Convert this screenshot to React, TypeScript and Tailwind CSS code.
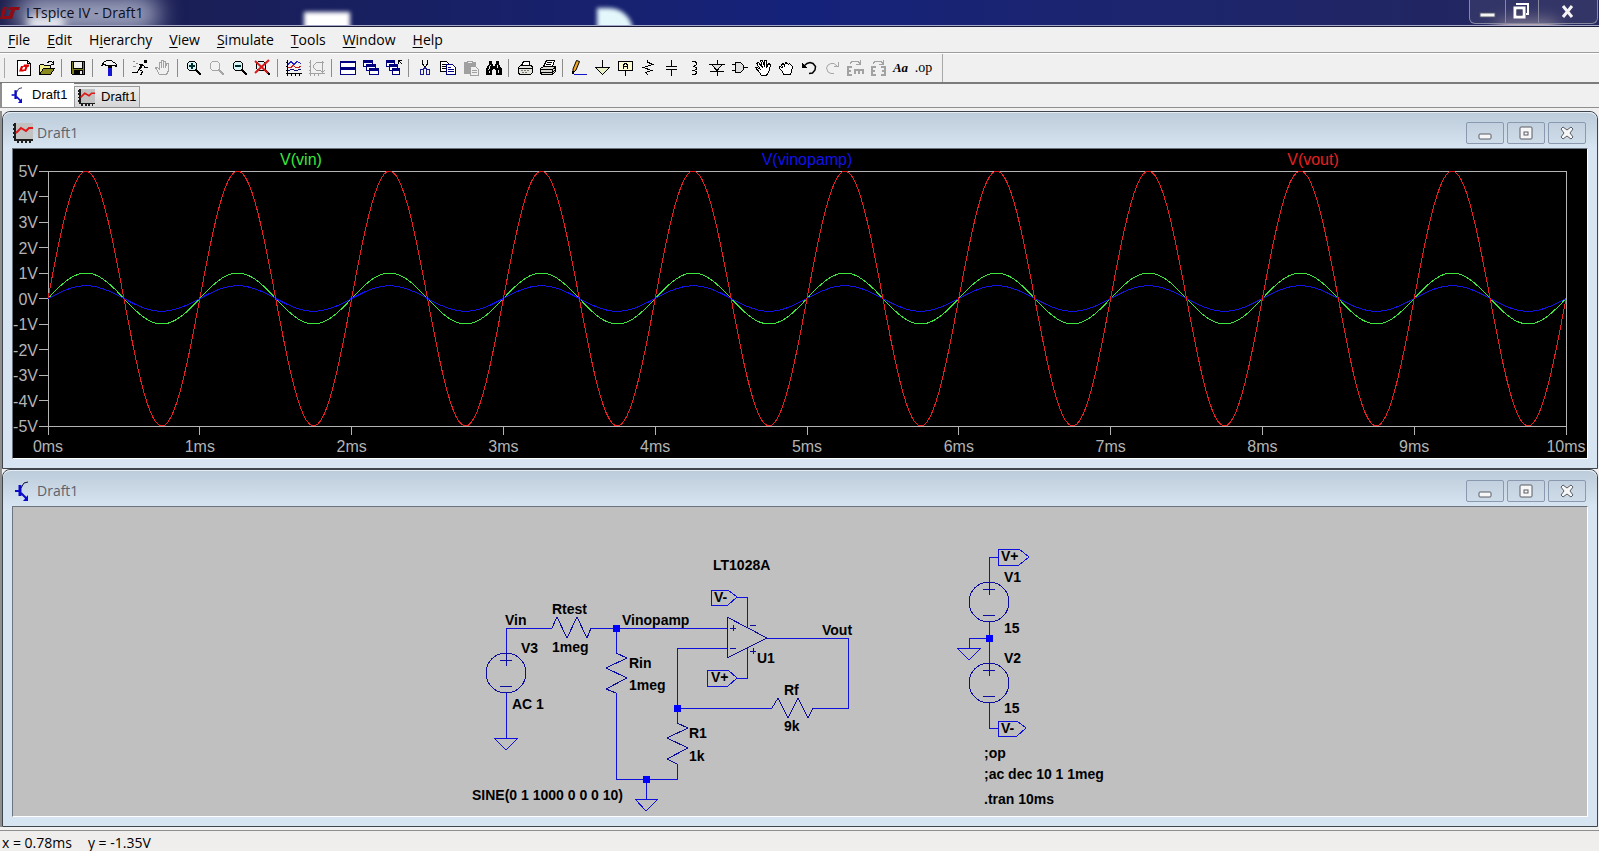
import React from 'react';
import clsx from 'clsx';

/** Toolbar glyph, drawn on the pixel grid */
const Glyph: React.FC<{ children: React.ReactNode }> = ({ children }) => (
  <svg
    width="18"
    height="18"
    viewBox="0 0 18 18"
    fill="none"
    stroke="#000"
    shapeRendering="crispEdges"
    aria-hidden="true"
  >
    {children}
  </svg>
);

const HAND_PATH =
  'M5.5 15.5 L2.5 10.5 L1.5 8.5 L3.5 8.5 L5.5 10.5 L5.5 3.5 L7.5 3.5 L7.5 8.5 L7.5 1.5 L9.5 1.5 L9.5 8.5 L9.5 2.5 L11.5 2.5 L11.5 8.5 L12.5 4.5 L14.5 4.5 L14.5 11.5 L12.5 15.5 Z';

const Lens = ({ color, fill = '#d9f4f4' }: { color: string; fill?: string }) => (
  <>
    <circle cx="7" cy="7" r="5" fill={fill} stroke={color} />
    <path d="M11 11 L16 16" stroke={color} strokeWidth="2" />
  </>
);

type Tool = { name: string; icon: React.ReactNode; disabled?: boolean };

const TOOL_GROUPS: Tool[][] = [
  [
    {
      name: 'New Schematic',
      icon: (
        <Glyph>
          <path d="M2.5 1.5 H12.5 L15.5 4.5 V16.5 H2.5 Z" fill="#fff" />
          <path d="M12.5 1.5 V4.5 H15.5" />
          <path
            d="M6 7 L4 12.5 H8.5 L9.5 10.5 H7 L8.5 7 Z M9 5.5 H14.5 L13.5 8 H12.5 L11 12 H8.8 L10.3 8 H8 Z"
            fill="#e00000"
            stroke="none"
            shapeRendering="auto"
          />
        </Glyph>
      ),
    },
    {
      name: 'Open',
      icon: (
        <Glyph>
          <path d="M1.5 14.5 V6.5 L2.5 5.5 H5.5 L6.5 6.5 H12.5 V9" fill="#f4f08c" />
          <path d="M1.5 15.5 L5.5 9.5 H16.5 L12.5 15.5 Z" fill="#8a8a1e" />
          <path d="M9.5 4.5 L10.5 2.5 H13.5 L15.5 4.5 M15.5 2 V5.5 M13 5.5 H16" />
        </Glyph>
      ),
    },
  ],
  [
    {
      name: 'Save',
      icon: (
        <Glyph>
          <path d="M2.5 2.5 H15.5 V15.5 H3.5 L2.5 14.5 Z" fill="#7c7c18" />
          <rect x="5" y="3" width="8" height="6" fill="#efefef" stroke="none" />
          <rect x="5" y="11" width="9" height="5" fill="#000" stroke="none" />
          <rect x="11" y="12" width="2" height="3" fill="#efefef" stroke="none" />
          <path d="M4.5 3 V9.5 H13.5 V3" />
        </Glyph>
      ),
    },
  ],
  [
    {
      name: 'Control Panel',
      icon: (
        <Glyph>
          <path
            d="M1.5 6.5 L4.5 2.5 L7.5 1.5 H11.5 L13.5 3.5 H14.5 L16.5 5.5 V7.5 L14.5 6.5 H6.5 L4.5 5.5 Z"
            fill="#f4f4f4"
          />
          <rect x="8" y="7" width="4" height="2" fill="#000" stroke="none" />
          <rect x="8" y="9" width="4" height="8" fill="#1414d2" stroke="none" />
        </Glyph>
      ),
    },
  ],
  [
    {
      name: 'Run',
      icon: (
        <Glyph>
          <rect x="13" y="1" width="3" height="3" fill="#000" stroke="none" />
          <path d="M7.5 5.5 H12 M8.5 10.5 L11.5 12.5 L9.5 16.5 M8 11 L6 13.5 H1 M12 6 L14 8.5 H17" />
          <path d="M11.5 5 L8 11" strokeWidth="2" />
          <path d="M2 2.5 H4 M5 4.5 H7 M2 7.5 H5" stroke="#8c8c8c" />
        </Glyph>
      ),
    },
    {
      name: 'Halt',
      disabled: true,
      icon: (
        <Glyph>
          <path d={HAND_PATH} stroke="#a2a2a2" />
        </Glyph>
      ),
    },
  ],
  [
    {
      name: 'Zoom Area',
      icon: (
        <Glyph>
          <Lens color="#000" />
          <path d="M4 7 H10 M7 4 V10" strokeWidth="2" stroke="#003030" />
        </Glyph>
      ),
    },
    {
      name: 'Pan',
      disabled: true,
      icon: (
        <Glyph>
          <Lens color="#a6a6a6" fill="#f2f2f2" />
        </Glyph>
      ),
    },
    {
      name: 'Zoom Out',
      icon: (
        <Glyph>
          <Lens color="#000" />
          <path d="M4 7 H10" strokeWidth="2" stroke="#003030" />
        </Glyph>
      ),
    },
    {
      name: 'Zoom Full Extents',
      icon: (
        <Glyph>
          <Lens color="#000" />
          <path d="M1 2 L14 14 M15 1 L1 14" stroke="#d81818" strokeWidth="2" shapeRendering="auto" />
        </Glyph>
      ),
    },
  ],
  [
    {
      name: 'Autorange',
      icon: (
        <Glyph>
          <path d="M2.5 1 V16.5 M1 14.5 H17 M1 3.5 H3 M1 7.5 H3 M1 11.5 H3 M6.5 14 V17 M10.5 14 V17 M14.5 14 V17" />
          <path d="M3 5.5 L6 2.5 L9 5.5 L12 2.5 L16 4.5" stroke="#2020c0" />
          <path d="M3 8.5 H6 L8 6.5 L11 8.5 H13 L16 7.5" stroke="#d01818" />
          <path d="M3 11.5 L7 10.5 L11 11.5 L16 10.5" stroke="#101070" />
        </Glyph>
      ),
    },
    {
      name: 'Plot Limits',
      disabled: true,
      icon: (
        <Glyph>
          <g stroke="#a2a2a2">
            <path d="M2.5 1 V16.5 M1 14.5 H17 M1 3.5 H3 M1 7.5 H3 M1 11.5 H3 M6.5 14 V17 M10.5 14 V17" />
            <path d="M13 3.5 H8.5 L5.5 6.5 V8.5 L8.5 11.5 H13 M14.5 2 V13 M12.5 4.5 L14.5 2.5 L16.5 4.5 M12.5 11.5 L14.5 13.5 L16.5 11.5" />
          </g>
        </Glyph>
      ),
    },
  ],
  [
    {
      name: 'Tile Windows',
      icon: (
        <Glyph>
          <g stroke="#000080">
            <rect x="1.5" y="2.5" width="15" height="6" fill="#fff" />
            <rect x="1.5" y="9.5" width="15" height="6" fill="#fff" />
            <path d="M1 3 H17 M1 10 H17" strokeWidth="2" />
          </g>
        </Glyph>
      ),
    },
    {
      name: 'Cascade Windows',
      icon: (
        <Glyph>
          <g stroke="#000080">
            <rect x="1.5" y="1.5" width="9" height="6" fill="#fff" />
            <path d="M1 3 H11" strokeWidth="2" />
            <rect x="4.5" y="5.5" width="9" height="6" fill="#fff" />
            <path d="M4 7 H14" strokeWidth="2" />
            <rect x="7.5" y="9.5" width="9" height="6" fill="#fff" />
            <path d="M7 11 H17" strokeWidth="2" />
          </g>
        </Glyph>
      ),
    },
    {
      name: 'Close All Windows',
      icon: (
        <Glyph>
          <g stroke="#000080">
            <rect x="1.5" y="1.5" width="8" height="6" fill="#fff" />
            <path d="M1 3 H10" strokeWidth="2" />
            <rect x="4.5" y="5.5" width="8" height="6" fill="#fff" />
            <path d="M4 7 H13" strokeWidth="2" />
            <rect x="7.5" y="9.5" width="7" height="6" fill="#fff" />
            <path d="M7 11 H15" strokeWidth="2" />
          </g>
          <path d="M13.5 5 V1.5 H17 M13.5 1.5 L17 5" />
        </Glyph>
      ),
    },
  ],
  [
    {
      name: 'Cut',
      icon: (
        <Glyph>
          <path d="M6.5 1 V4.5 L9 9 M11.5 1 V4.5 L9 9" />
          <g stroke="#1a1a90">
            <path d="M9 8 L7 11 M9 8 L11 11" />
            <ellipse cx="6" cy="13" rx="2" ry="3" />
            <ellipse cx="12" cy="13" rx="2" ry="3" />
          </g>
        </Glyph>
      ),
    },
    {
      name: 'Copy',
      icon: (
        <Glyph>
          <path d="M1.5 2.5 H7.5 L9.5 4.5 V12.5 H1.5 Z" fill="#fff" />
          <path d="M3 5.5 H7 M3 7.5 H8 M3 9.5 H8" />
          <path d="M7.5 5.5 H13.5 L16.5 8.5 V15.5 H7.5 Z" fill="#fff" stroke="#000080" />
          <path d="M9 8.5 H12 M9 10.5 H15 M9 12.5 H15" stroke="#000080" />
        </Glyph>
      ),
    },
    {
      name: 'Paste',
      disabled: true,
      icon: (
        <Glyph>
          <rect x="2" y="3" width="12" height="12" rx="1" fill="#a0a0a0" stroke="none" />
          <path d="M5.5 4.5 V2.5 H10.5 V4.5 Z" fill="#efefef" stroke="#a0a0a0" />
          <path d="M8.5 7.5 H13.5 L16.5 10.5 V16.5 H8.5 Z" fill="#efefef" stroke="#a0a0a0" />
          <path d="M10 11.5 H15 M10 13.5 H15" stroke="#a0a0a0" />
        </Glyph>
      ),
    },
    {
      name: 'Find',
      icon: (
        <Glyph>
          <path
            d="M4 2 H7 V5 H8 V7 H10 V5 H11 V2 H14 V5 L17 10 V16 H11 V11 H10 V10 H8 V11 H7 V16 H1 V10 L4 5 Z"
            fill="#000"
            stroke="none"
          />
          <path d="M5.5 6 L3.5 11 M12.5 6 V9 M13.5 11 V14 M4.5 12 V14" stroke="#e8e8e8" />
        </Glyph>
      ),
    },
  ],
  [
    {
      name: 'Print Setup',
      icon: (
        <Glyph>
          <path d="M5.5 6.5 L7.5 2.5 H13.5 V6.5" fill="#fff" />
          <path d="M2.5 8.5 L4.5 6.5 H15.5 L16.5 8.5 V13.5 L14.5 15.5 H3.5 L2.5 13.5 Z" fill="#e4e4dc" />
          <path d="M3 9.5 H16" />
          <path d="M5 11.5 H7 M8 11.5 H10 M11 11.5 H13 M6 13.5 H8 M9 13.5 H11" stroke="#777" />
        </Glyph>
      ),
    },
    {
      name: 'Print',
      icon: (
        <Glyph>
          <path d="M4.5 7.5 L7.5 1.5 H15.5 L13.5 7.5" fill="#fff" />
          <path d="M8 3.5 H13 M7 5.5 H12" />
          <path d="M1.5 9.5 L4.5 7.5 H16.5 V12.5 L13.5 15.5 H2.5 L1.5 13.5 Z" fill="#d8d8d0" />
          <path d="M2 10.5 H13.5 L16 8.5 M2 13.5 H13.5 L16 11 M13.5 10 V15" />
        </Glyph>
      ),
    },
  ],
  [
    {
      name: 'Wire',
      icon: (
        <Glyph>
          <path d="M6.5 1.5 L9.5 2.5 L6 11 L3 14 L3 10 Z" fill="#f0a820" shapeRendering="auto" />
          <path d="M3.5 12 L3 15" strokeWidth="2" />
          <path d="M4 15.5 H17" stroke="#1414c8" />
        </Glyph>
      ),
    },
    {
      name: 'Ground',
      icon: (
        <Glyph>
          <path d="M9.5 1 V8.5" />
          <path d="M2.5 8.5 H16.5 L9.5 15.5 Z" fill="#e6f0c4" />
        </Glyph>
      ),
    },
    {
      name: 'Label Net',
      icon: (
        <Glyph>
          <rect x="2.5" y="2.5" width="14" height="9" rx="1" fill="#fbfad0" />
          <path d="M9.5 12 V16.5 M7.5 10 V6.5 L8.5 4.5 H10.5 L11.5 6.5 V10 M8 7.5 H11" />
        </Glyph>
      ),
    },
    {
      name: 'Resistor',
      icon: (
        <Glyph>
          <path d="M8.5 1 V3 L13.5 5.5 L4.5 8.5 L12.5 11.5 L6.5 13.5 L9.5 16.5" />
        </Glyph>
      ),
    },
    {
      name: 'Capacitor',
      icon: (
        <Glyph>
          <path d="M9.5 1 V7 M4 7.5 H15 M4 10.5 H15 M9.5 11 V17" />
        </Glyph>
      ),
    },
    {
      name: 'Inductor',
      icon: (
        <Glyph>
          <path d="M7 2.5 H9.5 L11.5 3.5 V5.5 L8.5 7.5 L11.5 8.5 V10.5 L8.5 11.5 L11.5 12.5 V14.5 L9.5 15.5 H7" />
        </Glyph>
      ),
    },
    {
      name: 'Diode',
      icon: (
        <Glyph>
          <path d="M3.5 5.5 H14.5 L9 11.5 Z" fill="#dedede" />
          <path d="M1 5.5 H17 M2 12.5 H16 M9 1 V5 M9 12 V17" />
        </Glyph>
      ),
    },
    {
      name: 'Component',
      icon: (
        <Glyph>
          <path d="M4.5 3.5 H9.5 L12.5 6.5 V10.5 L9.5 13.5 H4.5 Z" fill="#dedede" />
          <path d="M1 5.5 H4 M1 11.5 H4 M13 8.5 H17" />
        </Glyph>
      ),
    },
    {
      name: 'Move',
      icon: (
        <Glyph>
          <path
            d="M7.5 16.5 L5.5 13.5 L1.5 8.5 L3.5 8.5 L6.5 10.5 L2.5 4.5 L4.5 3.5 L8.5 8.5 L6.5 1.5 L8.5 1.5 L10.5 7.5 L10.5 1.5 L12.5 1.5 L12.5 8.5 L14.5 4.5 L16.5 5.5 L15.5 11.5 L12.5 16.5 Z"
            fill="#fff"
          />
        </Glyph>
      ),
    },
    {
      name: 'Drag',
      icon: (
        <Glyph>
          <path
            d="M6.5 15.5 L5.5 12.5 L2.5 9.5 L2.5 7.5 L5.5 8.5 L4.5 5.5 L6.5 4.5 L7.5 6.5 L8.5 3.5 L10.5 4.5 L11.5 5.5 L12.5 4.5 L15.5 7.5 L14.5 12.5 L13.5 15.5 Z"
            fill="#fff"
          />
        </Glyph>
      ),
    },
    {
      name: 'Undo',
      icon: (
        <Glyph>
          <path d="M4 7 L7 4.5 L10 3.5 L13 4.5 L15.5 7.5 L15 11 L12.5 14 L9 14.5" shapeRendering="auto" strokeWidth="1.5" />
          <path d="M2 4 V9 H7 Z" fill="#000" stroke="none" />
        </Glyph>
      ),
    },
    {
      name: 'Redo',
      disabled: true,
      icon: (
        <Glyph>
          <path d="M14 7 L11 4.5 H8 L5 6 L3.5 9 L5 13 L8 14.5 H11" stroke="#a6a6a6" shapeRendering="auto" />
          <path d="M15.5 3 V7.5 H11" stroke="#a6a6a6" />
        </Glyph>
      ),
    },
    {
      name: 'Rotate',
      disabled: true,
      icon: (
        <Glyph>
          <g stroke="#a2a2a2">
            <path d="M6 8 H2 V16 H6 M2 12 H5" strokeWidth="2" />
            <path d="M9 15 V11 H17 V15 M13 11 V15" strokeWidth="2" />
            <path d="M4 4.5 L6 2.5 H12 L14 4.5 M14.5 1 V5.5 H10" />
          </g>
        </Glyph>
      ),
    },
    {
      name: 'Mirror',
      disabled: true,
      icon: (
        <Glyph>
          <g stroke="#a2a2a2">
            <path d="M7 8 H3 V16 H7 M3 12 H6 M12 8 H16 V16 H12 M16 12 H13" strokeWidth="2" />
            <path d="M4 4.5 L6 2.5 H12 L14 4.5 M14.5 1 V5.5 H10" />
          </g>
        </Glyph>
      ),
    },
    {
      name: 'Text',
      icon: <span className="font-['Liberation_Serif',serif] text-[13px] font-bold italic">Aa</span>,
    },
    {
      name: 'SPICE Directive',
      icon: <span className="font-['Liberation_Serif',serif] text-sm font-medium">.op</span>,
    },
  ],
];

// text before the access key, the key itself, text after it
const MENUS = [
  ['', 'F', 'ile'],
  ['', 'E', 'dit'],
  ['H', 'i', 'erarchy'],
  ['', 'V', 'iew'],
  ['', 'S', 'imulate'],
  ['', 'T', 'ools'],
  ['', 'W', 'indow'],
  ['', 'H', 'elp'],
];

const WaveIcon = ({ size }: { size: number }) => (
  <svg width={size} height={size} viewBox="0 0 20 20" shapeRendering="crispEdges" aria-hidden="true">
    <rect x="3" y="0" width="17" height="17" fill="#c2c2c2" />
    <path
      d="M2 0 V18 M2 17 H20 M0 2 H3 M0 6 H3 M0 10 H3 M0 14 H3 M5 16 V20 M9 16 V20 M13 16 V20 M17 16 V20"
      stroke="#1c1c1c"
      strokeWidth="2"
      fill="none"
    />
    <path
      d="M3 10 L6 7 L8 5 L13 8 L16 5 H20"
      stroke="#e01818"
      strokeWidth="2"
      fill="none"
      shapeRendering="auto"
    />
  </svg>
);

const TransistorIcon = ({ size }: { size: number }) => (
  <svg width={size} height={size} viewBox="0 0 20 20" fill="none" stroke="#0a0ac8" aria-hidden="true">
    <path d="M2 10 H6" strokeWidth="2" />
    <path d="M7 4 V15" strokeWidth="3" />
    <path d="M8 7 L11 2 L15 1" stroke="#101040" />
    <path d="M8 12 L14 18" strokeWidth="2" />
    <path d="M15 14 V20 H10 Z" fill="#0a0ac8" stroke="none" />
  </svg>
);

const TitleBar = () => (
  <header className="relative flex h-[27px] shrink-0 items-center overflow-hidden border-b border-[#1a1c38] bg-linear-to-r from-[#1b1d4c] via-[#15227a] to-[#24265c]">
    {/* desktop showing through the glass */}
    <div className="absolute -top-1 left-4 h-9 w-36 rounded-full bg-[#a3a8c2] blur-md" />
    <div className="absolute top-4 left-7 h-4 w-9 bg-white/80 blur-xs" />
    <div className="absolute top-3 left-[304px] h-5 w-[46px] bg-white blur-[2px]" />
    <div className="absolute top-2 left-[597px] h-6 w-9 rounded-tr-full bg-[#e4f7fb] blur-[2px]" />
    <div className="absolute top-5 right-10 h-5 w-16 rounded-full bg-[#f5dcd0] blur-sm" />
    <div className="absolute inset-x-0 bottom-0 h-px bg-[#a5a8c8]" />
    <svg className="relative shrink-0" width="22" height="16" viewBox="0 0 22 16" aria-hidden="true">
      <path d="M3 2 H7 L4 11 H9 L8 14 H0 Z M9 2 H20 L19 5 H15 L12 14 H8 L11 5 H8 Z" fill="#8e0c14" />
    </svg>
    <h1 className="relative ml-1 text-sm text-[#0d0f1c]">LTspice IV - Draft1</h1>
    <div className="relative mr-px ml-auto flex h-6 self-start rounded-b-md border border-t-0 border-[#85889f] bg-[#3d3f6c]/60">
      <button aria-label="Minimize" className="flex w-9 items-center justify-center border-r border-[#85889f]">
        <svg width="18" height="18" viewBox="0 0 18 18">
          <rect x="1" y="10" width="15" height="4" fill="#f4f4f4" stroke="#55586c" />
        </svg>
      </button>
      <button aria-label="Restore" className="flex w-[33px] items-center justify-center border-r border-[#85889f]">
        <svg width="18" height="18" viewBox="0 0 18 18" fill="none">
          <path d="M4 2 V1 H15 V11 H13" stroke="#fff" strokeWidth="2" />
          <rect x="2" y="5" width="9" height="9" stroke="#fff" strokeWidth="3" />
          <rect x="4" y="7" width="5" height="5" stroke="#44475c" />
        </svg>
      </button>
      <button aria-label="Close" className="flex w-[58px] items-center justify-center">
        <svg width="16" height="16" viewBox="0 0 16 16">
          <path d="M3 2 L12 13 M12 2 L3 13" stroke="#f4f4f4" strokeWidth="3" />
        </svg>
      </button>
    </div>
  </header>
);

const MenuBar = () => (
  <nav className="flex h-[26px] shrink-0 items-center gap-[17px] border-b border-[#9c9c9c] bg-[#f0f0f0] pl-2 text-sm">
    {MENUS.map(([before, key, after]) => (
      <button key={before + key + after} className="leading-5">
        {before}
        <span className="underline underline-offset-2">{key}</span>
        {after}
      </button>
    ))}
  </nav>
);

const Toolbar = () => (
  <div
    role="toolbar"
    className="flex h-[31px] shrink-0 items-center border-t border-b-2 border-t-white border-b-[#7b7b7b] bg-[#f0f0f0]"
  >
    <div className="mr-[7px] ml-1 h-5 w-px bg-[#a8a8a8]" />
    {TOOL_GROUPS.map((group, index) => (
      <React.Fragment key={group[0].name}>
        {index > 0 && <div className="mr-1 ml-[3px] h-[18px] w-px bg-[#8c8c8c]" />}
        {group.map((tool) => (
          <button
            key={tool.name}
            title={tool.name}
            disabled={tool.disabled}
            className="flex h-6 w-[23px] items-center justify-center"
          >
            {tool.icon}
          </button>
        ))}
      </React.Fragment>
    ))}
    <div className="ml-[7px] h-full w-px bg-[#a8a8a8]" />
  </div>
);

const TabStrip = () => (
  <div
    role="tablist"
    className="flex h-6 shrink-0 items-end border-b border-l-2 border-[#8f8f8f] bg-[#f0f0f0] font-['Liberation_Sans',sans-serif] text-[13px]"
  >
    <button role="tab" aria-selected="true" className="flex h-6 w-[72px] items-center gap-[6px] bg-white pl-2">
      <TransistorIcon size={16} />
      Draft1
    </button>
    <button
      role="tab"
      aria-selected="false"
      className="flex h-[21px] w-[66px] items-center gap-[6px] border border-b-0 border-[#9a9a9a] bg-linear-to-b from-[#efefef] to-[#d6d6d6] pl-[3px]"
    >
      <WaveIcon size={17} />
      Draft1
    </button>
  </div>
);

const captionButton =
  'flex h-[22px] w-[38px] items-center justify-center rounded-xs border border-[#8b99b0] bg-linear-to-b from-[#c3d0df] to-[#cedbe9]';

type ChildWindowProps = {
  icon: React.ReactNode;
  title: string;
  clientClass: string;
  children: React.ReactNode;
};

const ChildWindow: React.FC<ChildWindowProps> = ({ icon, title, clientClass, children }) => (
  <section className="flex min-h-0 flex-1 flex-col rounded-t-lg border border-[#3f454d] bg-[#d7e4f2] px-[9px] pb-[9px]">
    <div className="-mx-[9px] flex h-9 shrink-0 items-center rounded-t-lg border-t border-[#e6edf5] bg-linear-to-b from-[#bdccda] to-[#d7e4f2] pt-[5px] pr-[11px] pl-[10px]">
      {icon}
      <h2 className="ml-1 text-sm text-[#59636e]">{title}</h2>
      <div className="ml-auto flex gap-[3px]">
        <button aria-label="Minimize" className={captionButton}>
          <svg width="14" height="14" viewBox="0 0 14 14">
            <rect x="1" y="8" width="12" height="5" rx="1" fill="#f7f7f7" stroke="#585d66" />
          </svg>
        </button>
        <button aria-label="Maximize" className={captionButton}>
          <svg width="14" height="14" viewBox="0 0 14 14" fill="#f7f7f7" stroke="#585d66">
            <rect x="1" y="1" width="12" height="12" rx="1" />
            <rect x="5" y="6" width="4" height="3" />
          </svg>
        </button>
        <button aria-label="Close" className={captionButton}>
          <svg width="14" height="14" viewBox="0 0 14 14">
            <path
              d="M1 3 L3 1 L7 4 L11 1 L13 3 L10 7 L13 11 L11 13 L7 10 L3 13 L1 11 L4 7 Z"
              fill="#f7f7f7"
              stroke="#585d66"
            />
          </svg>
        </button>
      </div>
    </div>
    <div
      className={clsx(
        'min-h-0 flex-1 overflow-hidden border border-t-[#6c757f] border-r-white border-b-white border-l-[#6c757f]',
        clientClass,
      )}
    >
      {children}
    </div>
  </section>
);

const PLOT = { left: 35, right: 1553, top: 22, bottom: 277 };
const X_STEP = (PLOT.right - PLOT.left) / 10;
const Y_STEP = (PLOT.bottom - PLOT.top) / 10;
const Y_ZERO = (PLOT.top + PLOT.bottom) / 2;

/**
 * Samples a 1 kHz sine over the 10 ms sweep
 *
 * @param amplitude - Peak value in volts
 * @returns The polyline points
 */
const sinePoints = (amplitude: number): string => {
  const points: string[] = [];
  for (let x = PLOT.left; x <= PLOT.right; x += 3) {
    const time = (x - PLOT.left) / X_STEP;
    const y = Y_ZERO - amplitude * Y_STEP * Math.sin(2 * Math.PI * time);
    points.push(`${x},${y.toFixed(1)}`);
  }
  return points.join(' ');
};

const TRACES = [
  { name: 'V(vin)', amplitude: 1, color: '#3ce63c', labelX: 288 },
  { name: 'V(vinopamp)', amplitude: 0.5, color: '#1212e6', labelX: 794 },
  { name: 'V(vout)', amplitude: 5, color: '#e62020', labelX: 1300 },
];

const WaveformPlot = () => (
  <svg
    className="block h-full w-full font-['Liberation_Sans',sans-serif] text-base"
    viewBox="0 0 1574 309"
    role="img"
    aria-label="Waveforms"
  >
    <g stroke="#b4b4b4" fill="none" shapeRendering="crispEdges">
      <rect x={PLOT.left} y={PLOT.top} width={PLOT.right - PLOT.left} height={PLOT.bottom - PLOT.top} />
      {Array.from({ length: 11 }, (_, i) => (
        <React.Fragment key={i}>
          <line x1={PLOT.left - 9} x2={PLOT.left} y1={PLOT.top + i * Y_STEP} y2={PLOT.top + i * Y_STEP} />
          <line x1={PLOT.left + i * X_STEP} x2={PLOT.left + i * X_STEP} y1={PLOT.bottom} y2={PLOT.bottom + 9} />
        </React.Fragment>
      ))}
    </g>
    <g fill="#b4b4b4">
      {Array.from({ length: 11 }, (_, i) => (
        <React.Fragment key={i}>
          <text x={25} y={Math.round(PLOT.top + i * Y_STEP) + 6} textAnchor="end">
            {5 - i}V
          </text>
          <text x={PLOT.left + i * X_STEP} y={303} textAnchor="middle">
            {i}ms
          </text>
        </React.Fragment>
      ))}
    </g>
    {TRACES.map((trace) => (
      <g key={trace.name}>
        <text x={trace.labelX} y={16} textAnchor="middle" fill={trace.color}>
          {trace.name}
        </text>
        <polyline
          points={sinePoints(trace.amplitude)}
          fill="none"
          stroke={trace.color}
          shapeRendering="crispEdges"
        />
      </g>
    ))}
  </svg>
);

const LABELS: [number, number, string][] = [
  [505, 625, 'Vin'],
  [552, 614, 'Rtest'],
  [521, 653, 'V3'],
  [552, 652, '1meg'],
  [622, 625, 'Vinopamp'],
  [629, 668, 'Rin'],
  [629, 690, '1meg'],
  [512, 709, 'AC 1'],
  [822, 635, 'Vout'],
  [713, 570, 'LT1028A'],
  [757, 663, 'U1'],
  [784, 695, 'Rf'],
  [784, 731, '9k'],
  [689, 738, 'R1'],
  [689, 761, '1k'],
  [472, 800, 'SINE(0 1 1000 0 0 0 10)'],
  [714, 602, 'V-'],
  [711, 682, 'V+'],
  [1001, 561, 'V+'],
  [1004, 582, 'V1'],
  [1004, 633, '15'],
  [1004, 663, 'V2'],
  [1004, 713, '15'],
  [1001, 733, 'V-'],
  [984, 758, ';op'],
  [984, 779, ';ac dec 10 1 1meg'],
  [984, 804, '.tran 10ms'],
];

const JUNCTIONS = [
  [616, 628],
  [677, 708],
  [646, 779],
  [989, 638],
];

/** Independent source: circle with polarity marks */
const Source = ({ x, y }: { x: number; y: number }) => (
  <g>
    <circle cx={x} cy={y} r={20} />
    <path d={`M${x - 6} ${y - 13} h12 M${x} ${y - 19} v12 M${x - 6} ${y + 13} h12`} />
  </g>
);

const Schematic = () => (
  <svg
    className="block h-full w-full font-['Liberation_Sans',sans-serif] text-sm font-bold"
    viewBox="13 507 1574 309"
    role="img"
    aria-label="Schematic"
  >
    {/* wires, grounds and net flags */}
    <g stroke="#1010dc" fill="none" shapeRendering="crispEdges">
      <path d="M506 653 V628 H552 M591 628 H727 M616 628 V653 M616 693 V779 H677 V764 M646 779 V799" />
      <path d="M727 648 H677 V723 M677 708 H772 M813 708 H848 V638 H767 M506 693 V738" />
      <path d="M737 597 H747 V627 M737 678 H747 V648" />
      <path d="M494 738 H518 L506 750 Z M635 799 H658 L646 811 Z M957 648 H981 L969 660 Z" />
      <path d="M711 590 H728 L737 597 L728 605 H711 Z M707 670 H728 L737 678 L728 686 H707 Z" />
      <path d="M998 549 H1019 L1029 557 L1019 565 H998 Z M998 721 H1017 L1026 728 L1017 736 H998 Z" />
      <path d="M998 557 H989 V582 M989 622 V663 M989 638 H969 V648 M989 703 V728 H998" />
    </g>
    {/* component bodies */}
    <g stroke="#0c0ca0" fill="none" shapeRendering="crispEdges">
      <path d="M552 628 L557 617 L567 638 L577 617 L587 638 L591 628" />
      <path d="M772 708 L778 698 L788 718 L798 698 L808 718 L813 708" />
      <path d="M616 653 L627 658 L606 668 L627 678 L606 689 L616 693" />
      <path d="M677 723 L688 728 L667 738 L688 748 L667 759 L677 764" />
      <path d="M727 617 V658 L767 638 Z M730 628 H736 M733 625 V631 M730 648 H736 M750 625 H756 M750 651 H756 M753 648 V654" />
      <Source x={506} y={673} />
      <Source x={989} y={602} />
      <Source x={989} y={683} />
    </g>
    {JUNCTIONS.map(([x, y]) => (
      <rect key={`${x}-${y}`} x={x - 3} y={y - 3} width={7} height={7} fill="#0000ff" />
    ))}
    {LABELS.map(([x, y, text]) => (
      <text key={`${x}-${y}`} x={x} y={y}>
        {text}
      </text>
    ))}
  </svg>
);

export default function App() {
  return (
    <div className="flex h-screen flex-col bg-[#f0f0f0] font-['Open_Sans','Noto_Sans',sans-serif] text-black">
      <TitleBar />
      <MenuBar />
      <Toolbar />
      <TabStrip />
      <main className="mt-[3px] flex min-h-0 flex-1 flex-col border-l-2 border-[#8f8f8f] pr-px">
        <ChildWindow icon={<WaveIcon size={20} />} title="Draft1" clientClass="bg-black">
          <WaveformPlot />
        </ChildWindow>
        <ChildWindow icon={<TransistorIcon size={20} />} title="Draft1" clientClass="bg-[#c0c0c0]">
          <Schematic />
        </ChildWindow>
      </main>
      <footer className="mt-[3px] flex h-[21px] shrink-0 items-center gap-4 border-t border-[#8f8f8f] bg-[#f0eded] pt-[3px] pl-[2px] text-sm leading-4">
        <span>x = 0.78ms</span>
        <span>y = -1.35V</span>
      </footer>
    </div>
  );
}
